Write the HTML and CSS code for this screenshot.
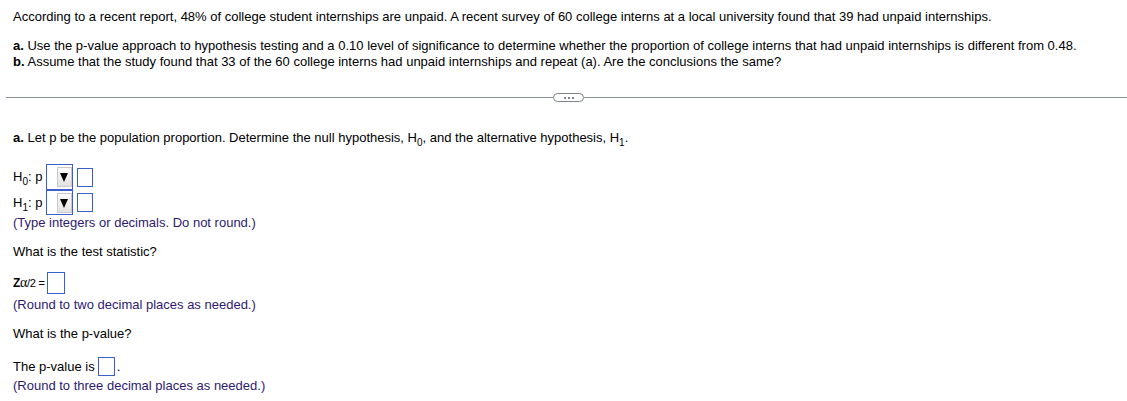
FILE: index.html
```html
<!DOCTYPE html>
<html>
<head>
<meta charset="utf-8">
<link rel="stylesheet" href="styles.css">
</head>
<body>
<div class="question">
  <p class="line first">According to a recent report, 48% of college student internships are unpaid. A recent survey of 60 college interns at a local university found that 39 had unpaid internships.</p>
  <p class="line parts"><b>a.</b> Use the p-value approach to hypothesis testing and a 0.10 level of significance to determine whether the proportion of college interns that had unpaid internships is different from 0.48.</p>
  <p class="line"><b>b.</b> Assume that the study found that 33 of the 60 college interns had unpaid internships and repeat (a). Are the conclusions the same?</p>
</div>
<div class="divider">
  <span class="rule left"></span>
  <span class="pill"><span class="dot"></span><span class="dot"></span><span class="dot"></span></span>
  <span class="rule right"></span>
</div>
<div class="answer">
  <p class="line intro"><b>a.</b> Let p be the population proportion. Determine the null hypothesis, H<sub>0</sub>, and the alternative hypothesis, H<sub>1</sub>.</p>
  <div class="hyp first-hyp">
    <span class="hlabel">H<sub>0</sub>: p</span>
    <span class="select"><span class="arrow"></span></span>
    <span class="inbox"></span>
  </div>
  <div class="hyp">
    <span class="hlabel">H<sub>1</sub>: p</span>
    <span class="select"><span class="arrow"></span></span>
    <span class="inbox"></span>
  </div>
  <p class="line hint">(Type integers or decimals. Do not round.)</p>
  <p class="line ask">What is the test statistic?</p>
  <div class="zrow">
    <span class="zlabel"><span class="zee">Z</span><span class="alpha">α</span>/2 =</span>
    <span class="inbox zbox"></span>
  </div>
  <p class="line hint">(Round to two decimal places as needed.)</p>
  <p class="line ask">What is the p-value?</p>
  <div class="prow">
    <span>The p-value is</span>
    <span class="inbox pbox"></span>
    <span>.</span>
  </div>
  <p class="line hint">(Round to three decimal places as needed.)</p>
</div>
</body>
</html>
```
FILE: styles.css
```css
html, body {
  margin: 0;
  padding: 0;
  background: #ffffff;
}
body {
  font-family: "Liberation Sans", Arial, sans-serif;
  font-size: 13px;
  color: #000;
}
.line {
  margin: 0;
  line-height: 16px;
  white-space: nowrap;
}
b { font-weight: bold; }
sub {
  font-size: 10px;
  vertical-align: -4px;
  line-height: 0;
}
.question {
  padding: 9px 13px 0 13px;
  height: 85px;
  box-sizing: border-box;
}
.question .parts { margin-top: 13px; }
.divider {
  display: flex;
  align-items: center;
  height: 9px;
  margin-top: 8px;
  padding-left: 6px;
}
.rule {
  height: 1px;
  background: #8a9099;
}
.rule.left { width: 547px; }
.rule.right { flex: 1; }
.pill {
  width: 29px;
  height: 7px;
  border: 1px solid #7b828c;
  border-radius: 5px;
  background: #fff;
  display: flex;
  align-items: center;
  justify-content: center;
  gap: 2px;
}
.dot {
  width: 2px;
  height: 2px;
  background: #555b63;
  border-radius: 1px;
}
.answer {
  padding: 0 13px;
}
.intro { margin-top: 28px; }
.hyp {
  display: flex;
  align-items: center;
  height: 26px;
}
.first-hyp { margin-top: 18px; }
.hyp + .hyp { height: 25px; }
.hlabel {
  width: 33px;
  line-height: 16px;
}
.select {
  width: 27px;
  height: 100%;
  box-sizing: border-box;
  border: 1px solid #3b5fcf;
  display: flex;
  align-items: center;
  justify-content: flex-end;
}
.arrow {
  width: 15px;
  height: 20px;
  box-sizing: border-box;
  border: 1px solid #c9c9c9;
  background: linear-gradient(#fbfbfb, #e2e2e2);
  position: relative;
}
.arrow::after {
  content: "";
  position: absolute;
  left: 2px;
  top: 5px;
  border-left: 4.5px solid transparent;
  border-right: 4.5px solid transparent;
  border-top: 9px solid #000;
}
.inbox {
  display: inline-block;
  width: 16px;
  height: 19px;
  box-sizing: border-box;
  border: 1px solid #3b5fcf;
  background: #fff;
  margin-left: 4px;
}
.hint {
  color: #2e1a6e;
}
.ask { margin-top: 13px; }
.zrow {
  display: flex;
  align-items: center;
  height: 22px;
  margin-top: 12px;
}
.zlabel {
  font-size: 11px;
  letter-spacing: -0.3px;
}
.zee {
  font-size: 12px;
  font-weight: bold;
}
.alpha {
  font-family: "Liberation Serif", serif;
  font-size: 14px;
}
.zbox {
  width: 18px;
  height: 22px;
  margin-left: 2px;
}
.zrow + .hint { margin-top: 3px; }
.prow {
  display: flex;
  align-items: center;
  height: 19px;
  margin-top: 15px;
  line-height: 16px;
}
.pbox {
  width: 17px;
  height: 19px;
  margin-left: 3px;
  margin-right: 2px;
}
.prow + .hint { margin-top: 2px; }
```
